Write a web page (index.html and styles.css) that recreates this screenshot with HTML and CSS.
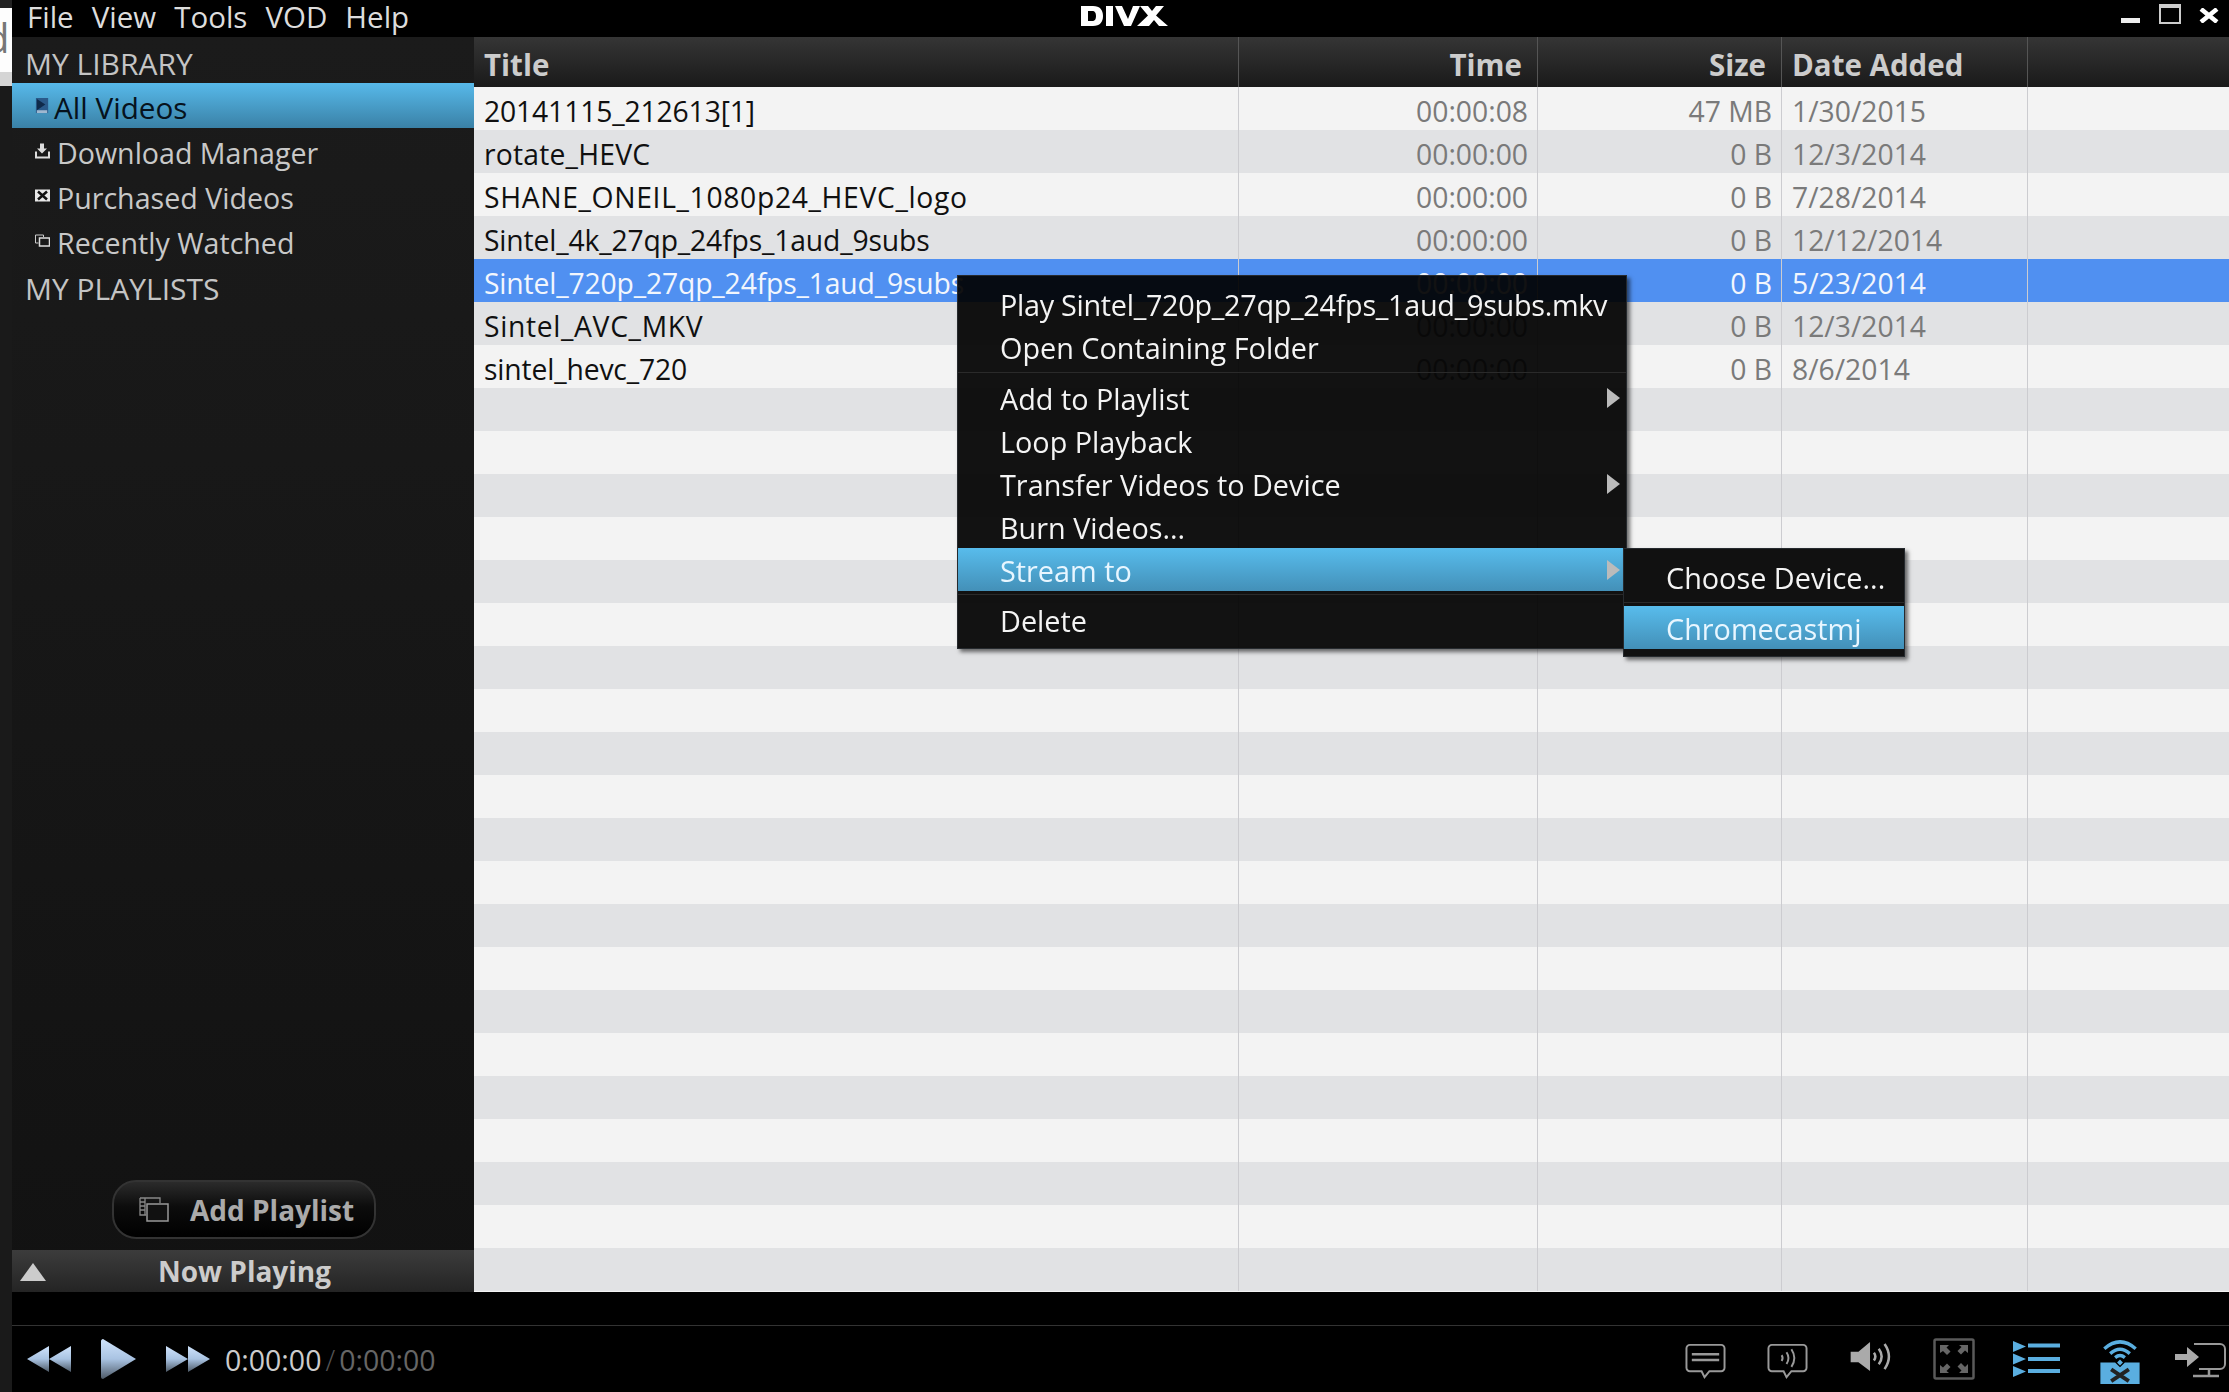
FILE: index.html
```html
<!DOCTYPE html>
<html lang="en">
<head>
<meta charset="utf-8">
<title>DivX Player</title>
<link rel="stylesheet" href="styles.css">
</head>
<body>
<div class="edge">
  <div class="edge-top"></div>
  <div class="edge-white"><span class="edge-glyph">d</span></div>
  <div class="edge-gray"></div>
</div>
<div class="app">
  <header class="topbar">
    <nav class="menubar"><span>File</span><span>View</span><span>Tools</span><span>VOD</span><span>Help</span></nav>
    <svg class="logo" viewBox="0 0 88 21" aria-label="DivX logo"><path fill="#fff" d="M0 0h12c7 0 10 4 10 10s-3 10-10 10H0zM7 5v10h4c3 0 4-2 4-5s-1-5-4-5zM25 0h7v20h-7zM34 0h7l6 13 5-13h7l-9 20h-7zM56 20l11-10.500L59 0h8l4 5 4-5h8l-8 9.500L87 20h-9l-5-6-5 6z"/></svg>
    <div class="winctl">
      <span class="win-min"></span>
      <span class="win-max"></span>
      <svg class="win-close" viewBox="0 0 22 15"><path d="M3 1l16 13M19 1L3 14" stroke="#fff" stroke-width="4.500"/></svg>
    </div>
  </header>

  <main class="main">
    <aside class="sidebar">
      <div class="side-head">MY LIBRARY</div>
      <div class="side-item side-item-on">
        <svg class="side-ico" viewBox="0 0 14 17"><rect width="13" height="16" fill="#2a5a8a"/><path d="M1 1l9 6-9 6z" fill="#0f2a4a"/><rect x="1" y="13" width="11" height="3" fill="#9fb8d0"/></svg>
        <span>All Videos</span>
      </div>
      <div class="side-item">
        <svg class="side-ico" viewBox="0 0 15 15"><path d="M5 0h4v5h3l-5 5-5-5h3z" fill="#ddd"/><path d="M1 8v6h13V8" fill="none" stroke="#ddd" stroke-width="2"/></svg>
        <span>Download Manager</span>
      </div>
      <div class="side-item">
        <svg class="side-ico" viewBox="0 0 15 13"><rect width="15" height="12" fill="#e8e8e8"/><path d="M3 2l9 8M12 2l-9 8" stroke="#111" stroke-width="2.500"/></svg>
        <span>Purchased Videos</span>
      </div>
      <div class="side-item">
        <svg class="side-ico" viewBox="0 0 15 13"><path d="M.5.500h8v2M.5.500v8h3" fill="none" stroke="#ccc"/><rect x="4.500" y="3.500" width="10" height="8" fill="none" stroke="#ddd" stroke-width="1.500"/></svg>
        <span>Recently Watched</span>
      </div>
      <div class="side-head side-head-lists">MY PLAYLISTS</div>
      <div class="side-fill"></div>
      <button class="add-btn" type="button">
        <svg class="add-ico" viewBox="0 0 30 25"><path d="M1 1h20v5M1 1v17h6M1 5h5M1 9h5M1 13h5M6 1v17" fill="none" stroke="#888" stroke-width="1.300"/><rect x="8" y="7" width="21" height="17" fill="#111" stroke="#999" stroke-width="1.500"/></svg>
        <span>Add Playlist</span>
      </button>
      <div class="now">
        <svg class="now-ico" viewBox="0 0 26 18"><path d="M13 0l13 18H0z" fill="#ccc"/></svg>
        <span class="now-text">Now Playing</span>
      </div>
    </aside>

    <section class="list">
      <div class="grid-row head">
        <div class="cell">Title</div><div class="cell num">Time</div><div class="cell num">Size</div><div class="cell">Date Added</div><div class="cell"></div>
      </div>
      <div class="grid-row"><div class="cell name name-tight">20141115_212613[1]</div><div class="cell num">00:00:08</div><div class="cell num">47 MB</div><div class="cell">1/30/2015</div><div class="cell"></div></div>
      <div class="grid-row"><div class="cell name name-mid">rotate_HEVC</div><div class="cell num">00:00:00</div><div class="cell num">0 B</div><div class="cell">12/3/2014</div><div class="cell"></div></div>
      <div class="grid-row"><div class="cell name name-caps">SHANE_ONEIL_1080p24_HEVC_logo</div><div class="cell num">00:00:00</div><div class="cell num">0 B</div><div class="cell">7/28/2014</div><div class="cell"></div></div>
      <div class="grid-row"><div class="cell name name-tight">Sintel_4k_27qp_24fps_1aud_9subs</div><div class="cell num">00:00:00</div><div class="cell num">0 B</div><div class="cell">12/12/2014</div><div class="cell"></div></div>
      <div class="grid-row sel"><div class="cell name name-tight">Sintel_720p_27qp_24fps_1aud_9subs</div><div class="cell num">00:00:00</div><div class="cell num">0 B</div><div class="cell">5/23/2014</div><div class="cell"></div></div>
      <div class="grid-row"><div class="cell name name-caps">Sintel_AVC_MKV</div><div class="cell num">00:00:00</div><div class="cell num">0 B</div><div class="cell">12/3/2014</div><div class="cell"></div></div>
      <div class="grid-row"><div class="cell name name-tight">sintel_hevc_720</div><div class="cell num">00:00:00</div><div class="cell num">0 B</div><div class="cell">8/6/2014</div><div class="cell"></div></div>
      <div class="grid-row"><div class="cell"></div><div class="cell"></div><div class="cell"></div><div class="cell"></div><div class="cell"></div></div>
      <div class="grid-row"><div class="cell"></div><div class="cell"></div><div class="cell"></div><div class="cell"></div><div class="cell"></div></div>
      <div class="grid-row"><div class="cell"></div><div class="cell"></div><div class="cell"></div><div class="cell"></div><div class="cell"></div></div>
      <div class="grid-row"><div class="cell"></div><div class="cell"></div><div class="cell"></div><div class="cell"></div><div class="cell"></div></div>
      <div class="grid-row"><div class="cell"></div><div class="cell"></div><div class="cell"></div><div class="cell"></div><div class="cell"></div></div>
      <div class="grid-row"><div class="cell"></div><div class="cell"></div><div class="cell"></div><div class="cell"></div><div class="cell"></div></div>
      <div class="grid-row"><div class="cell"></div><div class="cell"></div><div class="cell"></div><div class="cell"></div><div class="cell"></div></div>
      <div class="grid-row"><div class="cell"></div><div class="cell"></div><div class="cell"></div><div class="cell"></div><div class="cell"></div></div>
      <div class="grid-row"><div class="cell"></div><div class="cell"></div><div class="cell"></div><div class="cell"></div><div class="cell"></div></div>
      <div class="grid-row"><div class="cell"></div><div class="cell"></div><div class="cell"></div><div class="cell"></div><div class="cell"></div></div>
      <div class="grid-row"><div class="cell"></div><div class="cell"></div><div class="cell"></div><div class="cell"></div><div class="cell"></div></div>
      <div class="grid-row"><div class="cell"></div><div class="cell"></div><div class="cell"></div><div class="cell"></div><div class="cell"></div></div>
      <div class="grid-row"><div class="cell"></div><div class="cell"></div><div class="cell"></div><div class="cell"></div><div class="cell"></div></div>
      <div class="grid-row"><div class="cell"></div><div class="cell"></div><div class="cell"></div><div class="cell"></div><div class="cell"></div></div>
      <div class="grid-row"><div class="cell"></div><div class="cell"></div><div class="cell"></div><div class="cell"></div><div class="cell"></div></div>
      <div class="grid-row"><div class="cell"></div><div class="cell"></div><div class="cell"></div><div class="cell"></div><div class="cell"></div></div>
      <div class="grid-row"><div class="cell"></div><div class="cell"></div><div class="cell"></div><div class="cell"></div><div class="cell"></div></div>
      <div class="grid-row"><div class="cell"></div><div class="cell"></div><div class="cell"></div><div class="cell"></div><div class="cell"></div></div>
      <div class="grid-row"><div class="cell"></div><div class="cell"></div><div class="cell"></div><div class="cell"></div><div class="cell"></div></div>
      <div class="grid-row"><div class="cell"></div><div class="cell"></div><div class="cell"></div><div class="cell"></div><div class="cell"></div></div>
      <div class="grid-row"><div class="cell"></div><div class="cell"></div><div class="cell"></div><div class="cell"></div><div class="cell"></div></div>
    </section>
  </main>

  <footer class="player">
    <div class="seek"></div>
    <div class="controls">
      <svg class="tr-ico tr-rew" viewBox="0 0 44 26"><defs><linearGradient id="tg" x1="0" y1="0" x2="0" y2="1"><stop offset="0" stop-color="#cfe3fb"/><stop offset=".5" stop-color="#a9c3e2"/><stop offset="1" stop-color="#4d5966"/></linearGradient></defs><path d="M22 0v26L0 13zM44 0v26L22 13z" fill="url(#tg)"/></svg>
      <svg class="tr-ico tr-play" viewBox="0 0 35 40"><path d="M2 0l33 20L2 40c-1 0-2-1-2-2V2c0-1 1-2 2-2z" fill="url(#tg)"/></svg>
      <svg class="tr-ico tr-ff" viewBox="0 0 44 26"><path d="M0 0v26l22-13zM22 0v26l22-13z" fill="url(#tg)"/></svg>
      <div class="clock"><span class="clock-now">0:00:00</span><span class="clock-sep">/</span><span class="clock-all">0:00:00</span></div>
      <div class="tools">
        <svg class="tool tool-cc" viewBox="0 0 42 36"><path d="M5 1.500h32a3.500 3.500 0 0 1 3.500 3.500v20a3.500 3.500 0 0 1-3.500 3.500H25l-5 6-3-6H5A3.500 3.500 0 0 1 1.500 25V5A3.500 3.500 0 0 1 5 1.500z" fill="none" stroke="#999" stroke-width="2"/><path d="M7 11h28M7 17h28" stroke="#999" stroke-width="2.500"/></svg>
        <svg class="tool tool-au" viewBox="0 0 42 36"><path d="M5 1.500h32a3.500 3.500 0 0 1 3.500 3.500v20a3.500 3.500 0 0 1-3.500 3.500H25l-5 6-3-6H5A3.500 3.500 0 0 1 1.500 25V5A3.500 3.500 0 0 1 5 1.500z" fill="none" stroke="#999" stroke-width="2"/><path d="M15 12q2 3 0 6M20 9q4 6 0 12M25 6q6 9 0 18" fill="none" stroke="#999" stroke-width="2"/></svg>
        <svg class="tool tool-vol" viewBox="0 0 42 32"><path d="M0 10h8L20 0v30L8 21H0z" fill="#aaa"/><path d="M24 11q3 4 0 8M29 7q6 8 0 16M35 2q9 13 0 26" fill="none" stroke="#aaa" stroke-width="2.600"/></svg>
        <svg class="tool tool-fs" viewBox="0 0 42 42"><rect x="1.500" y="1.500" width="39" height="39" rx="1.500" fill="none" stroke="#5a5a5a" stroke-width="2.500"/><path d="M7 7h9l-2.500 2.500 4 4-3.500 3.500-4-4L7 15zM35 7v8l-3-2.500-4 4-3.500-3.500 4-4L26 7zM7 35v-8l3 2.500 4-4 3.500 3.500-4 4L16 35zM35 35h-9l2.500-2.500-4-4 3.500-3.500 4 4 3-3z" fill="#666"/></svg>
        <svg class="tool tool-pl" viewBox="0 0 47 36"><path d="M0 0l13 5.500L0 11zM0 12.500L13 18 0 23.500zM0 25l13 5.500L0 36z" fill="#5aaee0"/><path d="M15 2.500h32v4H15zM15 16h32v4H15zM15 28h32v4H15z" fill="#5aaee0"/></svg>
        <svg class="tool tool-cast" viewBox="0 0 40 50"><path d="M4 14q16-14 32 0M10 19q10-9 20 0M15 23q5-4 10 0" fill="none" stroke="#5aaee0" stroke-width="3.500"/><path d="M20 25l3 3-3 3-3-3z" fill="#5aaee0"/><path d="M0 28h15l5 5 5-5h15v22H0z" fill="#5aaee0"/><path d="M11 35l18 12M29 35L11 47" stroke="#222" stroke-width="4"/></svg>
        <svg class="tool tool-exit" viewBox="0 0 51 35"><path d="M0 11h12V4l12 10-12 10v-7H0z" fill="#aaa"/><path d="M19 1h26a5 5 0 0 1 5 5v15a5 5 0 0 1-5 5H24" fill="none" stroke="#999" stroke-width="2"/><path d="M34 26v6M18 33h26" stroke="#999" stroke-width="2.500"/></svg>
      </div>
    </div>
  </footer>
</div>

<div class="menu">
  <div class="mi mi-tight">Play Sintel_720p_27qp_24fps_1aud_9subs.mkv</div>
  <div class="mi">Open Containing Folder</div>
  <div class="msep msep-a"></div>
  <div class="mi">Add to Playlist<span class="arrow"></span></div>
  <div class="mi">Loop Playback</div>
  <div class="mi">Transfer Videos to Device<span class="arrow"></span></div>
  <div class="mi">Burn Videos...</div>
  <div class="mi mi-on">Stream to<span class="arrow"></span></div>
  <div class="msep msep-b"></div>
  <div class="mi">Delete</div>
</div>
<div class="submenu">
  <div class="mi">Choose Device...</div>
  <div class="msep msep-c"></div>
  <div class="mi mi-on">Chromecastmj</div>
</div>
</body>
</html>
```

FILE: styles.css
```css
* { box-sizing: border-box; }
html, body { margin: 0; height: 100%; }
body {
  position: relative;
  display: flex;
  width: 2229px;
  height: 1392px;
  overflow: hidden;
  background: #1a1a1a;
  font-family: "Open Sans", "Noto Sans", sans-serif;
  font-size: 28px;
}
.edge { width: 12px; flex: none; display: flex; flex-direction: column; background: #1a1a1a; }
.edge-top { height: 8px; background: #222; }
.edge-white { height: 64px; background: #fdfdfd; overflow: hidden; color: #777; line-height: 60px; font-size: 40px; }
.edge-glyph { display: block; margin-left: -15px; }
.edge-gray { height: 14px; background: #d5d5d5; }

.app { width: 2217px; flex: none; display: flex; flex-direction: column; height: 1392px; }

.topbar { height: 37px; flex: none; background: #000; display: flex; align-items: center; position: relative; }
.menubar { display: flex; gap: 18px; padding-left: 15px; color: #ddd; font-size: 29.500px; line-height: 34px; height: 37px; width: 1069px; }
.logo { width: 88px; height: 21px; flex: none; margin-top: -5px; }
.winctl { margin-left: auto; display: flex; align-items: flex-start; height: 37px; padding-right: 9px; }
.win-min { width: 19px; height: 5px; background: #eee; margin-top: 18px; }
.win-max { width: 22px; height: 20px; margin: 4px 0 0 19px; border: 2px solid #ccc; border-top-width: 4px; }
.win-close { width: 22px; height: 15px; margin: 8px 0 0 17px; }

.main { flex: 1; display: flex; min-height: 0; }
.sidebar { width: 462px; flex: none; display: flex; flex-direction: column; background: linear-gradient(#1b1b1b, #121212); color: #ccc; }
.side-head { height: 46px; line-height: 53px; padding-left: 13px; font-size: 30px; color: #c4c4c4; }
.side-head-lists { height: 45px; line-height: 51px; }
.side-item { height: 45px; display: flex; align-items: center; padding: 4px 0 0 23px; gap: 7px; font-size: 28.600px; color: #c8c8c8; }
.side-item-on { background: linear-gradient(#57b9ea, #3a81a6); color: #06121c; gap: 4px; font-size: 29.700px; }
.side-ico { width: 15px; height: 16px; flex: none; margin-top: -4px; }
.side-fill { flex: 1; }
.add-btn {
  align-self: flex-start;
  margin: 0 0 11px 100px;
  width: 264px;
  height: 59px;
  display: flex;
  align-items: center;
  gap: 21px;
  padding: 0 0 0 25px;
  border: 2px solid #333;
  border-radius: 24px;
  background: linear-gradient(#2b2b2b, #0c0c0c 45%, #000);
  color: #aaa;
  font: 700 28px "Open Sans", "Noto Sans", sans-serif;
}
.add-ico { width: 30px; height: 25px; flex: none; }
.now { height: 42px; display: flex; align-items: center; position: relative; background: linear-gradient(#3c3c3c, #242424); color: #ccc; font-weight: 700; font-size: 28px; }
.now-ico { width: 26px; height: 18px; margin-left: 8px; flex: none; margin-top: 2px; }
.now-text { position: absolute; left: 0; right: 0; text-align: center; padding-left: 3px; }

.list { flex: 1; display: flex; flex-direction: column; overflow: hidden; background: #f3f3f3; }
.grid-row { display: grid; grid-template-columns: 765px 299px 244px 246px 1fr; height: 43px; flex: none; background: #f3f3f3; line-height: 48px; font-size: 28.300px; color: #7a7a7a; }
.grid-row:nth-child(odd) { background: #e1e2e4; }
.grid-row:nth-child(1) { background: linear-gradient(#353535, #1a1a1a); color: #ccc; font-weight: 700; height: 50px; line-height: 55px; font-size: 29.500px; }
.grid-row.head .cell { border-right-color: #555; }
.grid-row.head .num { padding-right: 15px; }
.grid-row.sel { background: #5090f1; color: #f2f6fd; }
.cell { padding-left: 10px; border-right: 1px solid #ccccd0; white-space: nowrap; min-width: 0; }
.cell:last-child { border-right: 0; }
.num { text-align: right; padding: 0 9px 0 0; }
.name { color: #101010; overflow: visible; }
.name-tight { letter-spacing: -.15px; }
.name-mid { letter-spacing: .2px; }
.name-caps { letter-spacing: .65px; }
.sel .name { color: #f2f6fd; }

.player { height: 100px; flex: none; background: #000; display: flex; flex-direction: column; }
.seek { height: 34px; border-bottom: 1px solid #333; flex: none; }
.controls { flex: 1; display: flex; align-items: center; position: relative; }
.tr-ico { flex: none; display: block; }
.tr-rew { width: 44px; height: 26px; margin-left: 15px; }
.tr-play { width: 35px; height: 40px; margin-left: 30px; }
.tr-ff { width: 44px; height: 26px; margin-left: 30px; }
.clock { margin: 2px 0 0 15px; font-size: 28.500px; display: flex; gap: 4px; color: #ccc; }
.clock-sep { color: #555; font-weight: 300; }
.clock-all { color: #666; }
.tools { margin-left: auto; display: flex; align-items: center; padding-right: 3px; height: 100%; }
.tool { flex: none; display: block; }
.tool-cc { width: 41px; height: 36px; margin-top: 4px; }
.tool-au { width: 41px; height: 36px; margin-top: 4px; margin-left: 41px; }
.tool-vol { width: 42px; height: 31px; margin-left: 42px; margin-top: -3px; }
.tool-fs { width: 42px; height: 42px; margin-left: 41px; }
.tool-pl { width: 47px; height: 36px; margin-left: 38px; }
.tool-cast { width: 40px; height: 49px; margin-left: 40px; }
.tool-exit { width: 51px; height: 35px; margin-left: 35px; margin-top: 2px; }

.menu, .submenu {
  position: absolute;
  color: #f4f4f4;
  font-size: 28.800px;
  -webkit-backdrop-filter: brightness(.074);
  backdrop-filter: brightness(.074);
  box-shadow: 3px 3px 4px rgba(0,0,0,.55);
  border: 1px solid #262a2e;
}
.menu { left: 957px; top: 275px; width: 670px; height: 374px; padding-top: 6px; }
.submenu { left: 1623px; top: 548px; width: 282px; height: 109px; padding-top: 6px; background: #111; }
.mi { position: relative; height: 43px; line-height: 46px; padding-left: 42px; white-space: nowrap; }
.mi-tight { letter-spacing: -.3px; }
.mi-on { background: linear-gradient(#58bcec, #4390b8); color: #e8f6ff; }
.menu .mi-on { margin-right: 3px; }
.arrow { position: absolute; left: 649px; top: 12px; width: 0; height: 0; border-left: 13px solid #bbb; border-top: 10px solid transparent; border-bottom: 10px solid transparent; }
.msep { height: 1px; background: #2a2a2a; }
.msep-a { margin: 4px 0 3px; }
.msep-b { margin: 3px 0 3px; }
.msep-c { margin: 4px 0 3px; }
```
